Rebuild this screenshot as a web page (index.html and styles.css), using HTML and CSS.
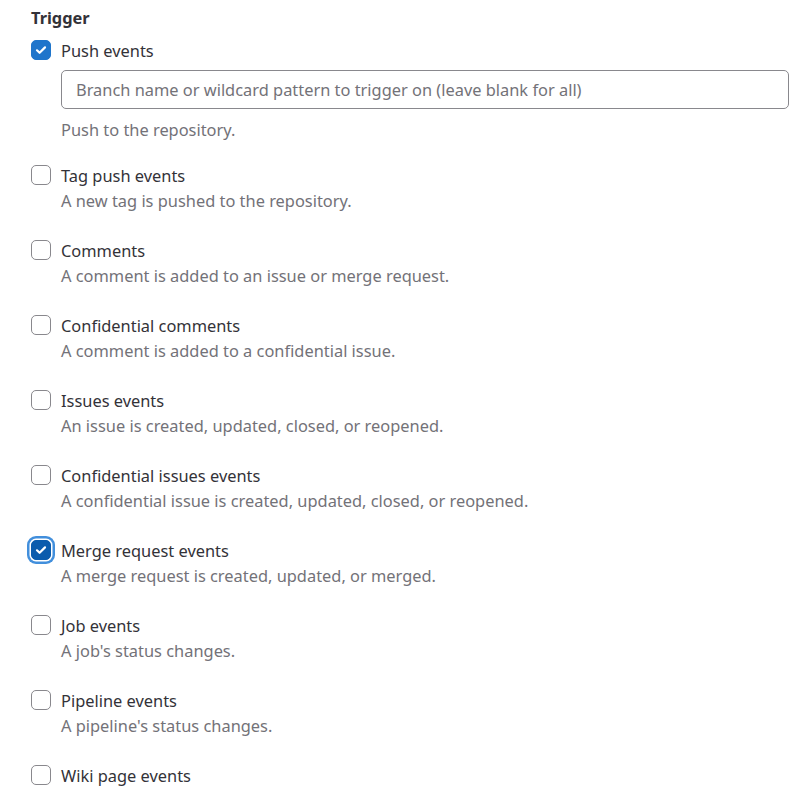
FILE: index.html
```html
<!DOCTYPE html>
<html>
<head>
<meta charset="utf-8">
<link rel="stylesheet" href="styles.css">
</head>
<body>
<div class="form">
  <div class="title">Trigger</div>

  <div class="row row-first">
    <div class="check-line">
      <span class="box checked"><svg viewBox="0 0 20 20" width="20" height="20"><path d="M6 10.3 L8.6 12.8 L14 7.4" fill="none" stroke="#fff" stroke-width="2.2" stroke-linecap="round" stroke-linejoin="round"/></svg></span>
      <span class="label">Push events</span>
    </div>
    <div class="indent">
      <div class="input">Branch name or wildcard pattern to trigger on (leave blank for all)</div>
      <div class="desc">Push to the repository.</div>
    </div>
  </div>

  <div class="row">
    <div class="check-line"><span class="box"></span><span class="label">Tag push events</span></div>
    <div class="desc indent">A new tag is pushed to the repository.</div>
  </div>

  <div class="row">
    <div class="check-line"><span class="box"></span><span class="label">Comments</span></div>
    <div class="desc indent">A comment is added to an issue or merge request.</div>
  </div>

  <div class="row">
    <div class="check-line"><span class="box"></span><span class="label">Confidential comments</span></div>
    <div class="desc indent">A comment is added to a confidential issue.</div>
  </div>

  <div class="row">
    <div class="check-line"><span class="box"></span><span class="label">Issues events</span></div>
    <div class="desc indent">An issue is created, updated, closed, or reopened.</div>
  </div>

  <div class="row">
    <div class="check-line"><span class="box"></span><span class="label">Confidential issues events</span></div>
    <div class="desc indent">A confidential issue is created, updated, closed, or reopened.</div>
  </div>

  <div class="row">
    <div class="check-line">
      <span class="box checked focused"><svg viewBox="0 0 20 20" width="20" height="20"><path d="M6 10.3 L8.6 12.8 L14 7.4" fill="none" stroke="#fff" stroke-width="2.2" stroke-linecap="round" stroke-linejoin="round"/></svg></span>
      <span class="label">Merge request events</span>
    </div>
    <div class="desc indent">A merge request is created, updated, or merged.</div>
  </div>

  <div class="row">
    <div class="check-line"><span class="box"></span><span class="label">Job events</span></div>
    <div class="desc indent">A job's status changes.</div>
  </div>

  <div class="row">
    <div class="check-line"><span class="box"></span><span class="label">Pipeline events</span></div>
    <div class="desc indent">A pipeline's status changes.</div>
  </div>

  <div class="row row-last">
    <div class="check-line"><span class="box"></span><span class="label">Wiki page events</span></div>
  </div>
</div>
</body>
</html>
```

FILE: styles.css
```css
html, body {
  margin: 0;
  padding: 0;
  background: #ffffff;
}

body {
  font-family: "Noto Sans", "Open Sans", sans-serif;
  font-size: 16.4px;
  line-height: 25px;
  color: #333238;
  overflow: hidden;
  height: 786px;
}

.form {
  padding: 4.5px 5px 0 31px;
}

.title {
  font-weight: 700;
  margin-bottom: 8px;
}

.row {
  margin-bottom: 25px;
}

.row-first {
  margin-bottom: 21px;
}

.row-last {
  margin-bottom: 0;
}

.check-line {
  display: flex;
  align-items: center;
  gap: 10px;
}

.box {
  box-sizing: border-box;
  width: 20px;
  height: 20px;
  flex: none;
  border: 1px solid #89888d;
  border-radius: 5px;
  background: #fff;
  display: flex;
}

.box.checked {
  background: #1f75cb;
  border-color: #1f75cb;
}

.box.focused {
  background: #0b5cad;
  border-color: #0b5cad;
  box-shadow: 0 0 0 1.5px #fff, 0 0 0 4px #428fdc;
}

.box svg {
  display: block;
  margin: -1px;
}

.indent {
  margin-left: 30px;
}

.input {
  box-sizing: border-box;
  height: 39px;
  margin: 7.5px 0 7.5px 0;
  border: 1px solid #89888d;
  border-radius: 5px;
  padding: 6px 14px;
  color: #737278;
  white-space: nowrap;
  overflow: hidden;
}

.desc {
  color: #737278;
}
```
